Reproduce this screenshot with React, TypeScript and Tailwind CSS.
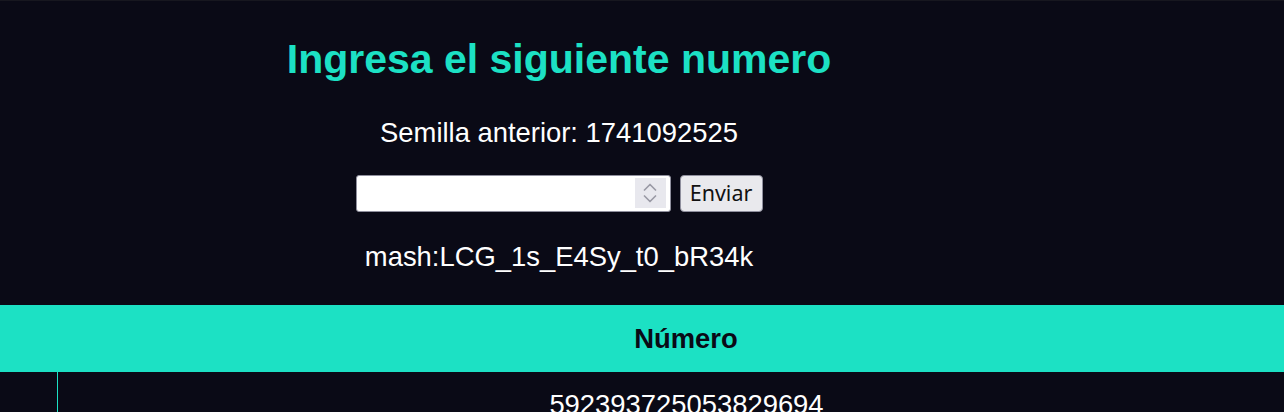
import { useState } from "react";

const TEAL = "#1ce1c4";

function SpinBox() {
  return (
    <div className="absolute right-[5px] top-[3px] flex h-[30px] w-[31px] flex-col items-center justify-center gap-[4px] bg-[#e8e8ee]">
      <svg width="14" height="8" viewBox="0 0 14 8" fill="none">
        <path d="M1.5 7 L7 1.5 L12.5 7" stroke="#9a9aa6" strokeWidth="1.7" strokeLinecap="round" strokeLinejoin="round" />
      </svg>
      <svg width="14" height="8" viewBox="0 0 14 8" fill="none">
        <path d="M1.5 1 L7 6.5 L12.5 1" stroke="#9a9aa6" strokeWidth="1.7" strokeLinecap="round" strokeLinejoin="round" />
      </svg>
    </div>
  );
}

export default function App() {
  const [value, setValue] = useState("");

  return (
    <div className="min-h-[412px] overflow-hidden border-t border-[#17171f] bg-[#0a0a16] font-['Liberation_Sans',Arial,sans-serif] text-white">
      {/* Form */}
      <div className="w-[1118px] pt-[35px] text-center">
        <h1 className="text-[41px] font-bold leading-[47px] text-[#1ce1c4]">Ingresa el siguiente numero</h1>
        <p className="mt-[34px] text-[27.4px] leading-[31.5px]">Semilla anterior: 1741092525</p>
        <div className="mt-[26px] flex items-center justify-center gap-[9px]">
          <div className="relative h-[37px] w-[315px]">
            <input
              type="text"
              value={value}
              onChange={e => setValue(e.target.value)}
              className="h-full w-full rounded-[3px] border border-[#8f8f9d] bg-white px-2 text-black outline-none"
            />
            <SpinBox />
          </div>
          <button className="h-[37px] w-[83px] rounded-[4px] border border-[#8f8f9d] bg-[#e9e9ed] font-['Noto_Sans',sans-serif] text-[21.5px] leading-none text-[#111]">
            Enviar
          </button>
        </div>
        <p className="mt-[29px] text-[27.4px] leading-[31.5px]">mash:LCG_1s_E4Sy_t0_bR34k</p>
      </div>

      {/* Table */}
      <div className="mt-[33px]">
        <div className="py-[17px] pl-[88px] text-center text-[27.4px] font-bold leading-[33px] text-[#0a0a16]" style={{ backgroundColor: TEAL }}>
          Número
        </div>
        <div className="flex">
          <div className="w-[58px] shrink-0 border-r border-[#1ce1c4]" />
          <div className="flex-1 py-[17px] pl-[31px] text-center text-[27.4px] leading-[31.5px]">592393725053829694</div>
        </div>
      </div>
    </div>
  );
}
